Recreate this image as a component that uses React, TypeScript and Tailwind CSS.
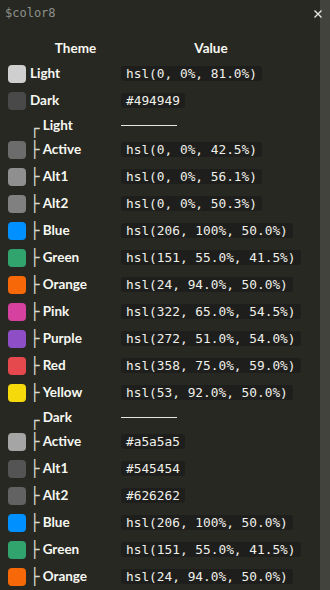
type Row = { name: string; color: string };

const light: Row[] = [
  { name: "Active", color: "hsl(0, 0%, 42.5%)" },
  { name: "Alt1", color: "hsl(0, 0%, 56.1%)" },
  { name: "Alt2", color: "hsl(0, 0%, 50.3%)" },
  { name: "Blue", color: "hsl(206, 100%, 50.0%)" },
  { name: "Green", color: "hsl(151, 55.0%, 41.5%)" },
  { name: "Orange", color: "hsl(24, 94.0%, 50.0%)" },
  { name: "Pink", color: "hsl(322, 65.0%, 54.5%)" },
  { name: "Purple", color: "hsl(272, 51.0%, 54.0%)" },
  { name: "Red", color: "hsl(358, 75.0%, 59.0%)" },
  { name: "Yellow", color: "hsl(53, 92.0%, 50.0%)" },
];

const dark: Row[] = [
  { name: "Active", color: "#a5a5a5" },
  { name: "Alt1", color: "#545454" },
  { name: "Alt2", color: "#626262" },
  { name: "Blue", color: "hsl(206, 100%, 50.0%)" },
  { name: "Green", color: "hsl(151, 55.0%, 41.5%)" },
  { name: "Orange", color: "hsl(24, 94.0%, 50.0%)" },
];

const mono = "font-['DejaVu_Sans_Mono',monospace]";

function Swatch({ color }: { color: string }) {
  return <div className="h-[18px] w-[18px] shrink-0 rounded-[4px]" style={{ background: color }} />;
}

function Value({ text }: { text: string }) {
  return (
    <span className={`${mono} rounded-[3px] bg-[#1e1f1c] px-[5px] py-px text-[12.8px] leading-[13px] text-[#f0f0ea]`}>
      {text}
    </span>
  );
}

function ColorRow({ row, branch }: { row: Row; branch?: boolean }) {
  return (
    <div className="flex h-[27px] items-center pl-2">
      <Swatch color={row.color} />
      <div className="flex w-[95px] items-center pl-1">
        {branch && <span className={`${mono} mr-[3px] text-[16px] leading-none text-[#d8d8cc]`}>├</span>}
        <span className="font-bold">{row.name}</span>
      </div>
      <Value text={row.color} />
    </div>
  );
}

function GroupRow({ name }: { name: string }) {
  return (
    <div className="flex h-[22px] items-center pl-2">
      <div className="w-[18px] shrink-0" />
      <div className="flex w-[95px] items-center pl-1">
        <span className={`${mono} mr-[3px] mt-[8px] text-[16px] leading-none text-[#d8d8cc]`}>┌</span>
        <span className="font-bold">{name}</span>
      </div>
      <div className="h-px w-[56px] bg-[#e6e6e0]" />
    </div>
  );
}

export default function App() {
  return (
    <div className="relative flex h-[590px] w-[330px] overflow-hidden bg-[#272822] font-['Lato',sans-serif] text-[13.5px] text-[#f8f8f2]">
      <div className="flex-1">
        <div className="flex h-[26px] items-center pl-[5px]">
          <span className={`${mono} text-[12px] text-[#8f908a]`}>$color8</span>
        </div>
        <div className="mt-[11px] flex h-[23px] items-center pl-2 font-bold">
          <div className="w-[18px]" />
          <div className="w-[95px] pl-1 text-center">Theme</div>
          <div className="w-[180px] text-center">Value</div>
        </div>
        <ColorRow row={{ name: "Light", color: "hsl(0, 0%, 81.0%)" }} />
        <div className="flex h-[27px] items-center pl-2">
          <Swatch color="#494949" />
          <div className="w-[95px] pl-1 font-bold">Dark</div>
          <Value text="#494949" />
        </div>
        <GroupRow name="Light" />
        {light.map((r) => (
          <ColorRow key={"l" + r.name} row={r} branch />
        ))}
        <GroupRow name="Dark" />
        {dark.map((r) => (
          <ColorRow key={"d" + r.name} row={r} branch />
        ))}
      </div>
      <div className="w-[10px] shrink-0 bg-[#43433e]" />
      <svg className="absolute right-[8px] top-[10px]" width="8" height="8" viewBox="0 0 8 8" stroke="#e8e8e2" strokeWidth="1.4">
        <path d="M0.5 0.5l7 7M7.5 0.5l-7 7" />
      </svg>
    </div>
  );
}
